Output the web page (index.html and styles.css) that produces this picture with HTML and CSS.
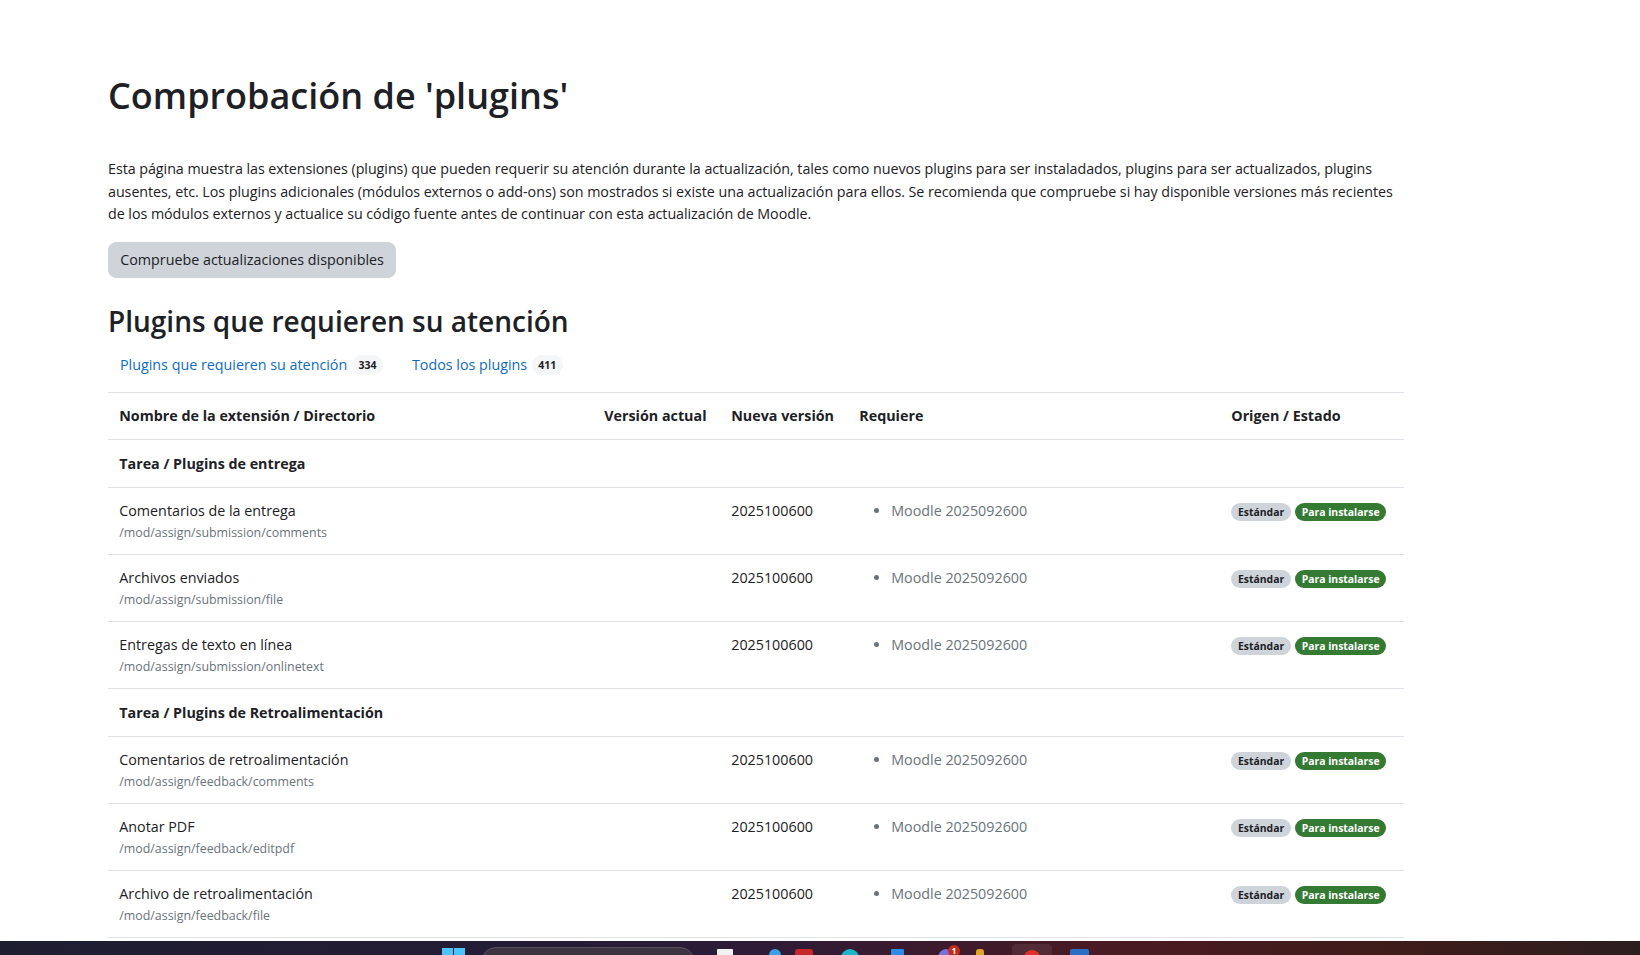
FILE: index.html
```html
<!DOCTYPE html>
<html lang="es">
<head>
    <meta charset="utf-8">
    <title>Comprobación de 'plugins'</title>
    <link rel="stylesheet" href="styles.css">
</head>
<body>
    <div class="page">
        <h1>Comprobación de 'plugins'</h1>
        <p class="intro">Esta página muestra las extensiones (plugins) que pueden requerir su atención durante la actualización, tales como nuevos plugins para ser instaladados, plugins para ser actualizados, plugins ausentes, etc. Los plugins adicionales (módulos externos o add-ons) son mostrados si existe una actualización para ellos. Se recomienda que compruebe si hay disponible versiones más recientes de los módulos externos y actualice su código fuente antes de continuar con esta actualización de Moodle.</p>
        <button type="button" class="btn">Compruebe actualizaciones disponibles</button>

        <h2>Plugins que requieren su atención</h2>
        <ul class="plugin-tabs">
            <li><a href="#">Plugins que requieren su atención <span class="count">334</span></a></li>
            <li><a href="#">Todos los plugins <span class="count">411</span></a></li>
        </ul>

        <!-- plugins table -->
        <table class="plugins">
            <colgroup>
                <col class="c-name">
                <col class="c-cur">
                <col class="c-new">
                <col class="c-req">
                <col class="c-status">
            </colgroup>
            <thead>
                <tr>
                    <th>Nombre de la extensión / Directorio</th>
                    <th>Versión actual</th>
                    <th>Nueva versión</th>
                    <th>Requiere</th>
                    <th>Origen / Estado</th>
                </tr>
            </thead>
            <tbody>
                <tr class="group"><th colspan="5">Tarea / Plugins de entrega</th></tr>
                <tr>
                    <td><div class="name">Comentarios de la entrega</div><div class="path">/mod/assign/submission/comments</div></td>
                    <td></td>
                    <td>2025100600</td>
                    <td><ul class="requires"><li>Moodle 2025092600</li></ul></td>
                    <td><div class="status"><span class="badge">Estándar</span><span class="badge badge-new">Para instalarse</span></div></td>
                </tr>
                <tr>
                    <td><div class="name">Archivos enviados</div><div class="path">/mod/assign/submission/file</div></td>
                    <td></td>
                    <td>2025100600</td>
                    <td><ul class="requires"><li>Moodle 2025092600</li></ul></td>
                    <td><div class="status"><span class="badge">Estándar</span><span class="badge badge-new">Para instalarse</span></div></td>
                </tr>
                <tr>
                    <td><div class="name">Entregas de texto en línea</div><div class="path">/mod/assign/submission/onlinetext</div></td>
                    <td></td>
                    <td>2025100600</td>
                    <td><ul class="requires"><li>Moodle 2025092600</li></ul></td>
                    <td><div class="status"><span class="badge">Estándar</span><span class="badge badge-new">Para instalarse</span></div></td>
                </tr>
                <tr class="group"><th colspan="5">Tarea / Plugins de Retroalimentación</th></tr>
                <tr>
                    <td><div class="name">Comentarios de retroalimentación</div><div class="path">/mod/assign/feedback/comments</div></td>
                    <td></td>
                    <td>2025100600</td>
                    <td><ul class="requires"><li>Moodle 2025092600</li></ul></td>
                    <td><div class="status"><span class="badge">Estándar</span><span class="badge badge-new">Para instalarse</span></div></td>
                </tr>
                <tr>
                    <td><div class="name">Anotar PDF</div><div class="path">/mod/assign/feedback/editpdf</div></td>
                    <td></td>
                    <td>2025100600</td>
                    <td><ul class="requires"><li>Moodle 2025092600</li></ul></td>
                    <td><div class="status"><span class="badge">Estándar</span><span class="badge badge-new">Para instalarse</span></div></td>
                </tr>
                <tr>
                    <td><div class="name">Archivo de retroalimentación</div><div class="path">/mod/assign/feedback/file</div></td>
                    <td></td>
                    <td>2025100600</td>
                    <td><ul class="requires"><li>Moodle 2025092600</li></ul></td>
                    <td><div class="status"><span class="badge">Estándar</span><span class="badge badge-new">Para instalarse</span></div></td>
                </tr>
            </tbody>
        </table>
    </div>

    <!-- windows taskbar peeking at the bottom of the screenshot -->
    <div class="taskbar">
        <span class="tb-win"><i></i><i></i><i></i><i></i></span>
        <span class="tb-search"></span>
        <span class="tb-icon tb-white"></span>
        <span class="tb-icon tb-blue"></span>
        <span class="tb-icon tb-red"></span>
        <span class="tb-icon tb-teal"></span>
        <span class="tb-icon tb-blue2"></span>
        <span class="tb-icon tb-purple"><b>1</b></span>
        <span class="tb-icon tb-yellow"></span>
        <span class="tb-tile"><span class="tb-chrome"></span></span>
        <span class="tb-icon tb-word"></span>
    </div>
</body>
</html>
```

FILE: styles.css
```css
/* Moodle-like upgrade page */
body {
    margin: 0;
    font-family: "Open Sans", "Noto Sans", sans-serif;
    font-size: 14.3px;
    line-height: 22.5px;
    color: #1d2125;
    background-color: #fff;
}

.page {
    width: 1296px;
    margin-left: 108px;
    padding-top: 74px;
    padding-bottom: 40px;
}

h1 {
    font-size: 36px;
    font-weight: 600;
    line-height: 1.2;
    margin: 0 0 41px;
}

.intro {
    margin: 0 0 16px;
    letter-spacing: -0.05px;
}

.btn {
    display: block;
    font: inherit;
    color: #1d2125;
    background-color: #ced4da;
    border: 1px solid #ced4da;
    border-radius: 8px;
    padding: 6px 11.25px;
    cursor: pointer;
}

h2 {
    font-size: 28px;
    font-weight: 600;
    line-height: 1.2;
    margin: 27px 0 7px;
}

/* tabs with counters */
.plugin-tabs {
    list-style: none;
    display: flex;
    gap: 5px;
    margin: 0 0 8px;
    padding: 0;
}

.plugin-tabs a {
    display: block;
    padding: 8px 12px;
    color: #0f6cbf;
    text-decoration: none;
}

.count {
    display: inline-block;
    margin-left: 1px;
    padding: 0 6.5px;
    font-size: 10.5px;
    font-weight: 700;
    line-height: 20px;
    color: #1d2125;
    background-color: #f5f6f8;
    border-radius: 10px;
    vertical-align: 1px;
}

/* table */
.plugins {
    width: 100%;
    border-collapse: collapse;
    table-layout: fixed;
}

.c-name { width: 485px; }
.c-cur { width: 127px; }
.c-new { width: 128px; }
.c-req { width: 372px; }
.c-status { width: 184px; }

.plugins th,
.plugins td {
    padding: 11.25px;
    border-top: 1px solid #dee2e6;
    border-bottom: 1px solid #dee2e6;
    text-align: left;
    vertical-align: top;
}

.plugins thead th {
    padding-top: 11.75px;
    padding-bottom: 11.75px;
    font-weight: 700;
    white-space: nowrap;
}

.plugins .group th {
    padding-top: 12.25px;
    padding-bottom: 12.25px;
    font-weight: 700;
}

.name {
    line-height: 22.5px;
}

.path {
    font-size: 12.4px;
    line-height: 21px;
    color: #6a737b;
}

.requires {
    margin: 0;
    padding-left: 32px;
    color: #6a737b;
}

.status {
    display: flex;
    gap: 4px;
    padding-top: 3.5px;
}

.badge {
    display: inline-block;
    padding: 0 6.75px;
    font-size: 10.4px;
    font-weight: 700;
    line-height: 18px;
    color: #1d2125;
    background-color: #ced4da;
    border-radius: 10px;
    white-space: nowrap;
}

.badge-new {
    color: #fff;
    background-color: #357a32;
}

/* taskbar */
.taskbar {
    position: fixed;
    left: 0;
    right: 0;
    bottom: 0;
    height: 14px;
    overflow: hidden;
    display: flex;
    align-items: flex-start;
    padding-left: 442px;
    background: linear-gradient(90deg, #1e1e31 0%, #231c36 30%, #2d1b38 45%, #4a1a22 68%, #3f1c1a 85%, #2c1e1f 100%);
}

.taskbar > span {
    flex: none;
}

.tb-win {
    display: grid;
    grid-template-columns: 11px 11px;
    gap: 1px;
    margin-top: 7px;
}

.tb-win i {
    display: block;
    height: 11px;
    background-color: #4cc2ff;
}

.tb-search {
    width: 212px;
    height: 30px;
    margin: 6px 0 0 16px;
    background-color: #3d3442;
    border: 1px solid #5a4f5c;
    border-radius: 15px;
}

.tb-icon {
    position: relative;
    width: 18px;
    height: 18px;
    margin-top: 8px;
    border-radius: 3px;
}

.tb-white { margin-left: 22px; width: 16px; background-color: #f2f2f2; border-radius: 1px; }
.tb-blue { margin-left: 36px; width: 12px; background-color: #3aa0e8; border-radius: 6px 6px 0 0; }
.tb-red { margin-left: 14px; background-color: #c8262b; }
.tb-teal { margin-left: 28px; background-color: #1fb5c9; border-radius: 50%; }
.tb-blue2 { margin-left: 32px; width: 13px; background-color: #2d8ae8; border-radius: 1px; }
.tb-purple { margin-left: 34px; width: 16px; background-color: #7a6fd6; border-radius: 50%; }
.tb-yellow { margin-left: 22px; width: 8px; background-color: #e0a526; }

.tb-purple b {
    position: absolute;
    top: -4px;
    right: -6px;
    width: 12px;
    height: 12px;
    font: 700 8px/12px "Open Sans", sans-serif;
    color: #fff;
    text-align: center;
    background-color: #c42b1c;
    border-radius: 50%;
}

.tb-tile {
    width: 40px;
    height: 30px;
    margin: 3px 0 0 28px;
    background-color: rgba(255, 255, 255, 0.08);
    border-radius: 4px;
    display: flex;
    justify-content: center;
}

.tb-chrome {
    width: 16px;
    height: 16px;
    margin-top: 6px;
    background-color: #e0322b;
    border-radius: 50%;
}

.tb-word { margin-left: 18px; width: 19px; background-color: #2b6fc4; border-radius: 2px; }
```
